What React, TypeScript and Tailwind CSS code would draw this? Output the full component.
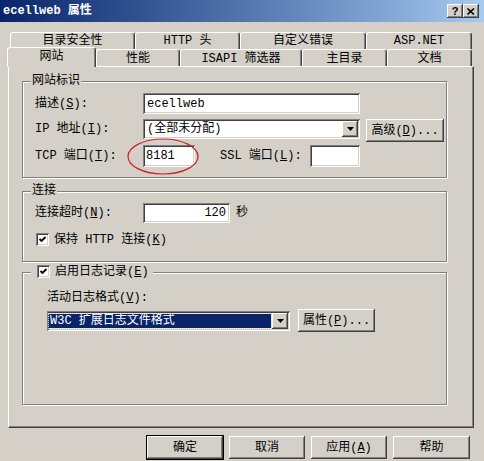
import type { ReactNode } from "react";

// classic 3D bevels
const RAISED =
  "shadow-[inset_-1px_-1px_#404040,inset_1px_1px_#ffffff,inset_-2px_-2px_#808080,inset_2px_2px_#d4d0c8]";
const SUNKEN =
  "shadow-[inset_1px_1px_#808080,inset_-1px_-1px_#ffffff,inset_2px_2px_#404040,inset_-2px_-2px_#d4d0c8]";

function Key({ label, k, rest = "" }: { label: string; k: string; rest?: string }) {
  return (
    <span className="whitespace-pre">
      {label}(<u>{k}</u>){rest}
    </span>
  );
}

function Button({ children, w, def = false }: { children: ReactNode; w: string; def?: boolean }) {
  return (
    <div
      className={`${w} h-[23px] flex items-center justify-center bg-[#d4d0c8] ${RAISED} ${
        def ? "outline outline-1 outline-black" : ""
      }`}
    >
      {children}
    </div>
  );
}

function DropArrow() {
  return (
    <div className={`w-[16px] h-[16px] flex items-center justify-center bg-[#d4d0c8] ${RAISED}`}>
      <svg width="7" height="4" viewBox="0 0 7 4">
        <polygon points="0,0 7,0 3.5,4" fill="#000" />
      </svg>
    </div>
  );
}

function Check() {
  return (
    <div className={`w-[13px] h-[13px] bg-white ${SUNKEN} flex items-center justify-center`}>
      <svg width="9" height="9" viewBox="0 0 9 9">
        <path d="M1.5 4 L3.5 6 L7.5 2" stroke="#000" strokeWidth="1.8" fill="none" />
      </svg>
    </div>
  );
}

function Group({
  legend,
  h,
  mt,
  children,
}: {
  legend: ReactNode;
  h: string;
  mt: string;
  children: ReactNode;
}) {
  return (
    <div
      className={`relative w-[425px] ${h} ${mt} border border-[#808080] shadow-[inset_1px_1px_#ffffff,1px_1px_#ffffff]`}
    >
      <div className="absolute -top-[7px] left-[8px] bg-[#d4d0c8] px-[1px] flex items-center">{legend}</div>
      {children}
    </div>
  );
}

const BACK_TABS = [
  { label: "目录安全性", w: "w-[125px]" },
  { label: "HTTP 头", w: "w-[105px]" },
  { label: "自定义错误", w: "w-[126px]" },
  { label: "ASP.NET", w: "w-[106px]" },
];

const FRONT_TABS = [
  { label: "性能", w: "w-[84px]" },
  { label: "ISAPI 筛选器", w: "w-[122px]" },
  { label: "主目录", w: "w-[85px]" },
  { label: "文档", w: "w-[85px]" },
];

const TAB =
  "h-[17px] flex items-center justify-center border-l border-t border-white border-r border-r-[#404040] rounded-t-[3px] shadow-[inset_-1px_0_#808080] whitespace-pre";

export default function App() {
  return (
    <div className="relative w-[484px] h-[461px] overflow-hidden bg-[#d4d0c8] flex flex-col text-[12px] leading-none text-black font-['Liberation_Mono','Noto_Sans_CJK_SC',monospace]">
      {/* title bar */}
      <div className="h-[22px] shrink-0 flex items-center pl-[3px] pr-[5px] bg-linear-to-r from-[#0a246a] to-[#a6caf0]">
        <span className="font-bold text-white">ecellweb 属性</span>
        <div className="ml-auto flex gap-[0px]">
          <div className={`w-[16px] h-[14px] bg-[#d4d0c8] ${RAISED} flex items-center justify-center font-bold text-[11px] font-['Liberation_Sans',sans-serif]`}>
            ?
          </div>
          <div className={`w-[16px] h-[14px] bg-[#d4d0c8] ${RAISED} flex items-center justify-center`}>
            <svg width="8" height="7" viewBox="0 0 8 7">
              <path d="M0.5 0.5 L7 6.5 M7 0.5 L0.5 6.5" stroke="#000" strokeWidth="1.6" />
            </svg>
          </div>
        </div>
      </div>

      {/* tab strip */}
      <div className="mt-[10px] pl-[8px]">
        <div className="flex pl-[2px]">
          {BACK_TABS.map((t) => (
            <div key={t.label} className={`${TAB} ${t.w}`}>
              {t.label}
            </div>
          ))}
        </div>
        <div className="flex items-end h-[17px]">
          <div className="relative z-10 -ml-[1px] -mb-[1px] w-[89px] h-[20px] flex items-center justify-center pb-[2px] bg-[#d4d0c8] border-l border-t border-white border-r border-r-[#404040] rounded-t-[3px] shadow-[inset_-1px_0_#808080]">
            网站
          </div>
          {FRONT_TABS.map((t) => (
            <div key={t.label} className={`${TAB} ${t.w} pt-[2px]`}>
              {t.label}
            </div>
          ))}
        </div>
      </div>

      {/* page */}
      <div className="ml-[8px] w-[466px] h-[362px] shrink-0 border border-white border-r-[#404040] border-b-[#404040] shadow-[inset_-1px_-1px_#808080] pl-[13px] pt-[14px] flex flex-col">
        <Group legend={<span>网站标识</span>} h="h-[97px]" mt="mt-0">
          <div className="pt-[11px] pl-[12px] flex flex-col">
            <div className="flex items-center h-[21px]">
              <div className="w-[108px]">
                <Key label="描述" k="S" rest=":" />
              </div>
              <div className={`w-[217px] h-[21px] bg-white ${SUNKEN} flex items-center pl-[4px]`}>ecellweb</div>
            </div>
            <div className="flex items-start h-[23px] mt-[5px]">
              <div className="w-[108px] h-[20px] flex items-center">
                <Key label="IP 地址" k="I" rest=":" />
              </div>
              <div className={`w-[217px] h-[20px] bg-white ${SUNKEN} flex items-center pl-[4px] pr-[2px]`}>
                <span>(全部未分配)</span>
                <div className="ml-auto">
                  <DropArrow />
                </div>
              </div>
              <div className="ml-[6px]">
                <Button w="w-[78px]">
                  <Key label="高级" k="D" rest="..." />
                </Button>
              </div>
            </div>
            <div className="flex items-center h-[22px] mt-[3px]">
              <div className="w-[108px]">
                <Key label="TCP 端口" k="T" rest=":" />
              </div>
              <div className={`w-[52px] h-[22px] bg-white ${SUNKEN} flex items-center pl-[3px]`}>8181</div>
              <div className="ml-[25px] w-[90px]">
                <Key label="SSL 端口" k="L" rest=":" />
              </div>
              <div className={`w-[50px] h-[22px] bg-white ${SUNKEN}`} />
            </div>
          </div>
        </Group>

        <Group legend={<span>连接</span>} h="h-[71px]" mt="mt-[13px]">
          <div className="pt-[11px] pl-[12px] flex flex-col">
            <div className="flex items-center h-[20px]">
              <div className="w-[108px]">
                <Key label="连接超时" k="N" rest=":" />
              </div>
              <div className={`w-[87px] h-[20px] bg-white ${SUNKEN} flex items-center justify-end pr-[4px]`}>120</div>
              <span className="ml-[6px]">秒</span>
            </div>
            <div className="flex items-center mt-[10px] pl-[1px] gap-[5px]">
              <Check />
              <Key label="保持 HTTP 连接" k="K" />
            </div>
          </div>
        </Group>

        <Group
          legend={
            <div className="flex items-center gap-[5px] pl-[5px] pr-[3px] -mt-[1px]">
              <Check />
              <Key label="启用日志记录" k="E" />
            </div>
          }
          h="h-[133px]"
          mt="mt-[10px]"
        >
          <div className="pt-[19px] pl-[24px] flex flex-col">
            <Key label="活动日志格式" k="V" rest=":" />
            <div className="flex items-center mt-[5px]">
              <div className={`w-[243px] h-[20px] bg-white ${SUNKEN} flex items-center pl-[2px] pr-[2px]`}>
                <div className="flex-1 h-[14px] bg-[#0a246a] text-white flex items-center pl-[1px] outline outline-1 outline-dotted outline-[#d4d0c8]">
                  W3C 扩展日志文件格式
                </div>
                <div className="ml-[1px]">
                  <DropArrow />
                </div>
              </div>
              <div className="ml-[8px]">
                <Button w="w-[77px]">
                  <Key label="属性" k="P" rest="..." />
                </Button>
              </div>
            </div>
          </div>
        </Group>
      </div>

      {/* dialog buttons */}
      <div className="mt-[8px] pl-[147px] flex gap-[6px]">
        <Button w="w-[76px]" def>
          确定
        </Button>
        <Button w="w-[76px]">取消</Button>
        <Button w="w-[76px]">
          <Key label="应用" k="A" />
        </Button>
        <Button w="w-[77px]">帮助</Button>
      </div>

      {/* hand-drawn circle round the port number */}
      <svg className="absolute left-[126px] top-[137px]" width="76" height="40" viewBox="0 0 76 40">
        <ellipse cx="37" cy="19.5" rx="35" ry="17.5" stroke="#cc2020" strokeWidth="1.2" fill="none" />
      </svg>
    </div>
  );
}
